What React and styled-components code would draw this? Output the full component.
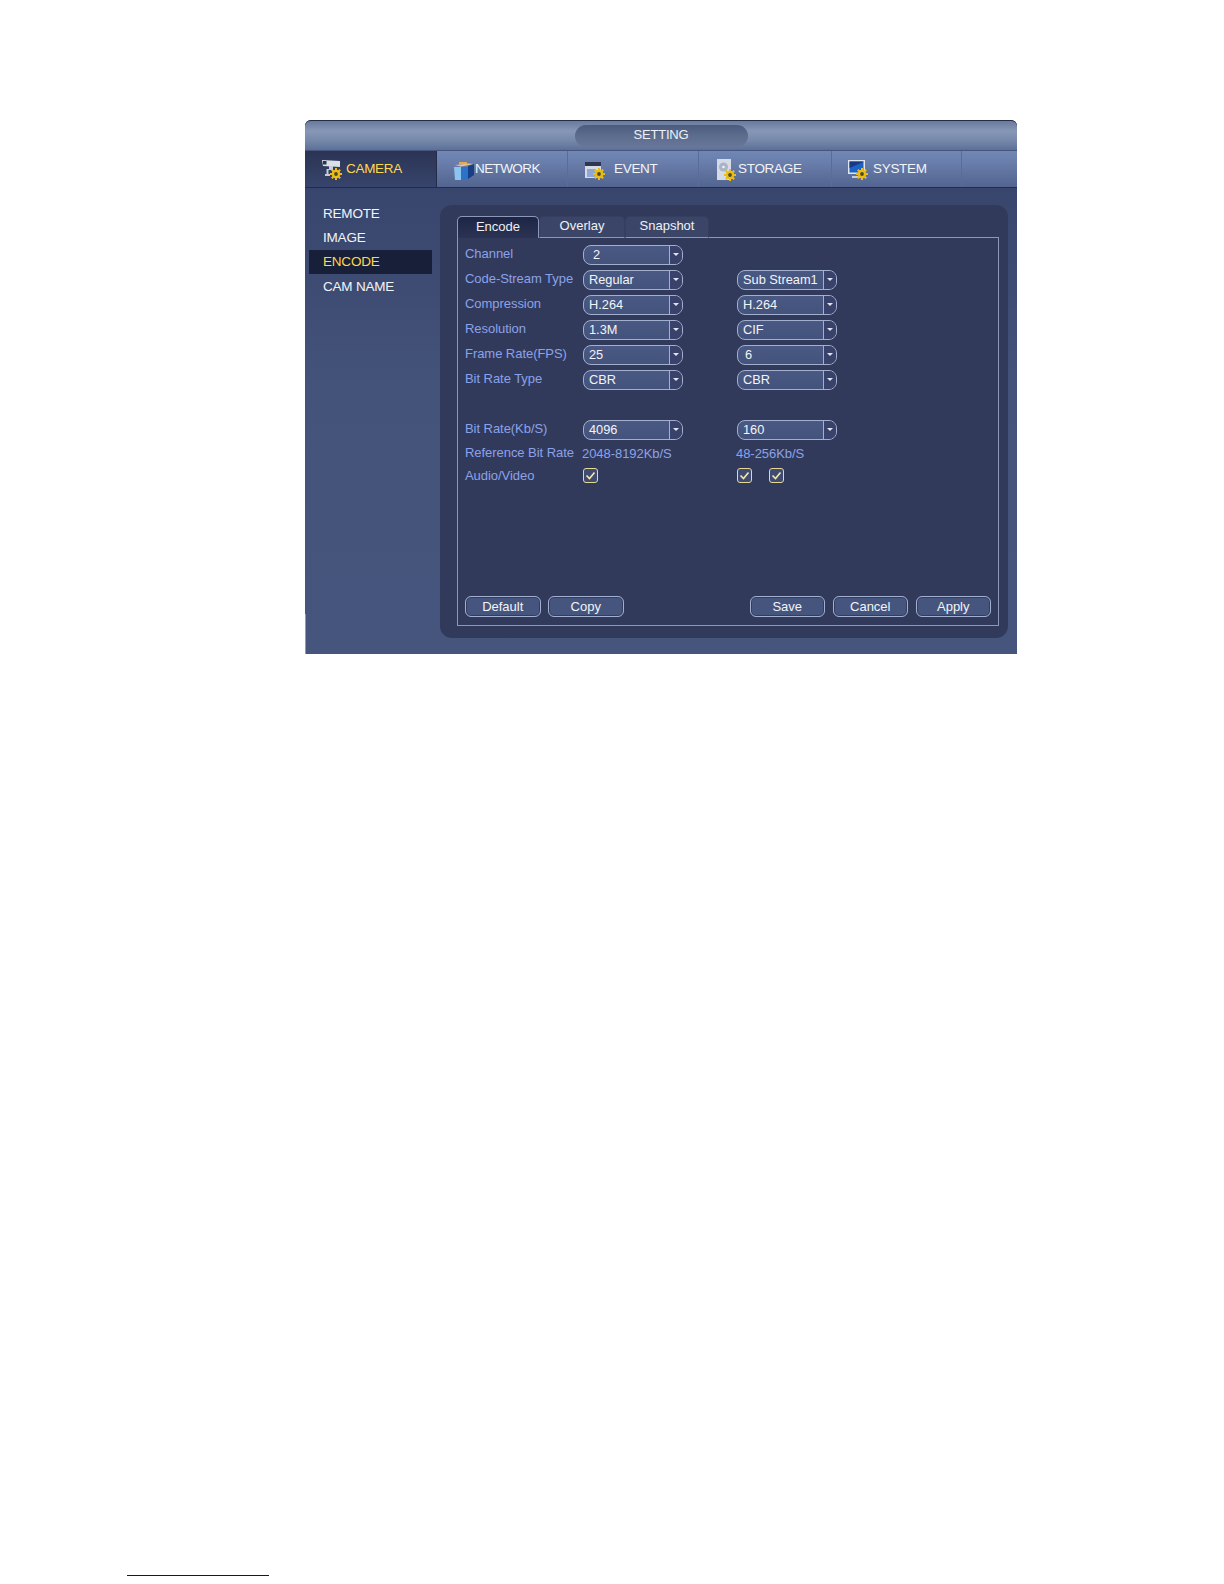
import React from 'react';
import styled, { createGlobalStyle } from 'styled-components';

const Global = createGlobalStyle`
  html, body { margin: 0; padding: 0; background: #fff; }
  body { font-family: "Liberation Sans", Arial, sans-serif; }
`;

const Page = styled.div`
  width: 1224px;
  height: 1584px;
  padding: 120px 0 0 305px;
  box-sizing: border-box;
  position: relative;
  overflow: hidden;
`;
const Window = styled.div`
  width: 712px;
  height: 534px;
  position: relative;
  background: linear-gradient(180deg, #38456d 68px, #445379 270px, #45557d 100%);
  border-radius: 6px 6px 0 0;
  display: flex;
  flex-direction: column;
  &::after {
    content: '';
    position: absolute;
    left: 0;
    bottom: 0;
    width: 1px;
    height: 40px;
    background: #8f9ab8;
  }
`;
const TitleBar = styled.div`
  height: 29px;
  flex: none;
  background: linear-gradient(180deg, #6a7a9c 0%, #8797b6 35%, #7487aa 70%, #5c6f97 100%);
  border-top: 1px solid #252c48;
  border-radius: 6px 6px 0 0;
  display: flex;
  justify-content: center;
  align-items: center;
`;
const TitlePill = styled.div`
  width: 173px;
  height: 22px;
  margin-left: 0;
  padding-bottom: 2px;
  box-sizing: border-box;
  border-radius: 11px;
  background: linear-gradient(180deg, #4b5b7e 0%, #5d6d8e 50%, #67769a 100%);
  color: #eef1f6;
  font-size: 13px;
  letter-spacing: -0.2px;
  display: flex;
  align-items: center;
  justify-content: center;
`;
const TabBar = styled.div`
  height: 38px;
  flex: none;
  box-sizing: border-box;
  display: flex;
  background: linear-gradient(180deg, #7088b6 0%, #677ba8 40%, #52648f 100%);
  border-top: 1px solid #47557d;
  border-bottom: 1px solid #232a4a;
`;
const MainTab = styled.div`
  width: ${p => p.$w}px;
  flex: none;
  height: 100%;
  box-sizing: border-box;
  display: flex;
  align-items: center;
  padding-left: ${p => p.$pad}px;
  padding-bottom: 2px;
  gap: ${p => p.$gap}px;
  font-size: 13.5px;
  letter-spacing: ${p => p.$ls || -0.3}px;
  color: ${p => (p.$active ? '#ffd84a' : '#f1f4f8')};
  background: ${p => (p.$active ? 'linear-gradient(180deg, #2b3454 0%, #37446c 100%)' : 'transparent')};
  border-right: 1px solid ${p => (p.$active ? '#232a4a' : '#5a6c98')};
  svg { flex: none; margin-top: 4px; }
`;
const Body = styled.div`
  flex: 1;
  display: flex;
  min-height: 0;
`;
const SideMenu = styled.div`
  width: 135px;
  flex: none;
  padding: 13px 0 0 4px;
  box-sizing: border-box;
`;
const SideItem = styled.div`
  width: 123px;
  height: 24.4px;
  box-sizing: border-box;
  padding-left: 14px;
  display: flex;
  align-items: center;
  font-size: 13.5px;
  letter-spacing: -0.2px;
  color: ${p => (p.$active ? '#ffd84a' : '#f1f4f8')};
  background: ${p => (p.$active ? '#181f38' : 'transparent')};
`;
const Panel = styled.div`
  width: 568px;
  height: 433px;
  margin-top: 17px;
  flex: none;
  background: #323a5b;
  border-radius: 12px;
  padding: 11px 9px 0 17px;
  box-sizing: border-box;
  display: flex;
  flex-direction: column;
`;
const SubTabs = styled.div`
  display: flex;
  height: 22px;
  flex: none;
`;
const SubTab = styled.div`
  width: ${p => p.$w}px;
  height: 22px;
  box-sizing: border-box;
  padding-bottom: 3px;
  display: flex;
  align-items: center;
  justify-content: center;
  font-size: 13px;
  color: #eef1f6;
  border-radius: 5px 5px 0 0;
  background: ${p => (p.$active ? 'linear-gradient(180deg, #1e2544 0%, #2b3354 100%)' : '#3b4567')};
  border: 1px solid ${p => (p.$active ? '#8d98b8' : '#363f60')};
  border-bottom: ${p => (p.$active ? 'none' : '1px solid #8d98b8')};
`;
const SubTabRest = styled.div`
  flex: 1;
  border-bottom: 1px solid #8d98b8;
`;
const Content = styled.div`
  width: 542px;
  height: 388px;
  box-sizing: border-box;
  border: 1px solid #8d98b8;
  border-top: none;
  padding: 4px 7px 0 7px;
  display: flex;
  flex-direction: column;
`;
const Row = styled.div`
  height: ${p => p.$h || 25}px;
  flex: none;
  display: flex;
  align-items: center;
`;
const Label = styled.div`
  width: 118px;
  flex: none;
  box-sizing: border-box;
  font-size: 13px;
  letter-spacing: -0.05px;
  color: #8ba2ea;
  white-space: nowrap;
  margin-top: -2px;
`;
const Cell = styled.div`
  width: 154px;
  flex: none;
  display: flex;
  align-items: center;
  gap: 17px;
`;
const Select = styled.div`
  width: 100px;
  height: 20px;
  box-sizing: border-box;
  border: 1px solid #a3afce;
  border-radius: 8px;
  background: linear-gradient(180deg, #4a5983 0%, #44537c 100%);
  display: flex;
  color: #f1f4f8;
  font-size: 12.8px;
  overflow: hidden;
`;
const SelectValue = styled.div`
  flex: 1;
  padding-left: ${p => p.$pad || 5}px;
  display: flex;
  align-items: center;
  white-space: nowrap;
`;
const SelectArrow = styled.div`
  width: 13px;
  flex: none;
  box-sizing: border-box;
  border-left: 1px solid #a3afce;
  background: #38426a;
  display: flex;
  align-items: center;
  justify-content: center;
  &::after {
    content: '';
    border: 3px solid transparent;
    border-top: 3px solid #dfe4ef;
    border-bottom: none;
  }
`;
const RefText = styled.div`
  font-size: 13px;
  letter-spacing: -0.05px;
  color: #8ba2ea;
  white-space: nowrap;
  margin-left: -1px;
`;
const Check = styled.div`
  width: 15px;
  height: 15px;
  margin-top: -2px;
  box-sizing: border-box;
  border: 1.5px solid #e6da92;
  border-radius: 3px;
  background: #3f4b72;
  display: flex;
  align-items: center;
  justify-content: center;
`;
const Buttons = styled.div`
  display: flex;
  margin-top: auto;
  margin-bottom: 8px;
  gap: 7.5px;
`;
const Button = styled.div`
  width: 75.5px;
  height: 21px;
  box-sizing: border-box;
  border: 1px solid #a3afce;
  border-radius: 6px;
  box-shadow: inset 0 0 0 1px #343d60;
  background: #46557e;
  color: #f1f4f8;
  font-size: 13px;
  display: flex;
  align-items: center;
  justify-content: center;
`;
const Spacer = styled.div`
  flex: 1;
`;
const FootLink = styled.div`
  position: absolute;
  left: 127px;
  top: 1575px;
  width: 142px;
  height: 1px;
  background: #0a0a90;
`;

const Gear = ({ x, y }) => (
  <g transform={`translate(${x} ${y})`}>
    <path d="M0-6V6M-6 0H6M-4.2-4.2L4.2 4.2M-4.2 4.2L4.2-4.2" stroke="#eebd14" strokeWidth="2" />
    <circle r="4.2" fill="#eebd14" />
    <circle r="1.9" fill="#4a4a30" />
  </g>
);

const CameraIcon = () => (
  <svg width="22" height="22" viewBox="0 0 22 22">
    <path d="M0 1L18 2V8L1 7Z" fill="#d9dee7" />
    <path d="M1 2H4.5V5.5H1Z" fill="#2a3350" />
    <path d="M7 7H11V11H6.5V15H8V17H3V15H4.5V10H7Z" fill="#c5ccd8" />
    <Gear x={14} y={15} />
  </svg>
);
const NetworkIcon = () => (
  <svg width="22" height="22" viewBox="0 0 22 22">
    <path d="M6 3H14V5H6Z" fill="#e9a850" />
    <path d="M2 6L16 4.5L21 5L8 7.5Z" fill="#e8c48c" />
    <path d="M1 8H8V21H2Z" fill="#8cc4ee" />
    <path d="M8 8H15V20L8 21Z" fill="#2c72c8" />
    <path d="M15 7L21 5V16L15 20Z" fill="#163f86" />
  </svg>
);
const EventIcon = () => (
  <svg width="22" height="22" viewBox="0 0 22 22">
    <path d="M1 3H17V19H1Z" fill="#d5dbe6" />
    <path d="M1 3H17V7H1Z" fill="#2e3650" />
    <path d="M3 10H12V18H3Z" fill="#8ea7d4" />
    <Gear x={15} y={15} />
  </svg>
);
const StorageIcon = () => (
  <svg width="22" height="24" viewBox="0 0 22 24">
    <path d="M1 1H15V22H1Z" fill="#d5dbe6" />
    <circle cx="7.5" cy="9" r="4.5" fill="#a9b4c8" />
    <circle cx="7.5" cy="9" r="1.3" fill="#eef1f6" />
    <Gear x={14} y={17} />
  </svg>
);
const SystemIcon = () => (
  <svg width="22" height="22" viewBox="0 0 22 22">
    <path d="M1 1H18V15H1Z" fill="#dfe4ef" />
    <path d="M2.5 2.5H16.5V13.5H2.5Z" fill="#1c63c6" />
    <path d="M2.5 9L16.5 3V2.5H2.5Z" fill="#173a86" />
    <path d="M5 17H13V19H5Z" fill="#c5ccd8" />
    <Gear x={15} y={15} />
  </svg>
);
const Tick = () => (
  <svg width="11" height="11" viewBox="0 0 11 11">
    <path d="M1.5 5.5L4.5 8.5L9.5 2.5" fill="none" stroke="#f6e9a8" strokeWidth="1.6" />
  </svg>
);

const Sel = ({ pad, children }) => (
  <Select>
    <SelectValue $pad={pad}>{children}</SelectValue>
    <SelectArrow />
  </Select>
);

const rows = [
  ['Channel', '2', null, 9],
  ['Code-Stream Type', 'Regular', 'Sub Stream1'],
  ['Compression', 'H.264', 'H.264'],
  ['Resolution', '1.3M', 'CIF'],
  ['Frame Rate(FPS)', '25', '6', 5, 7],
  ['Bit Rate Type', 'CBR', 'CBR'],
];

export default function App() {
  return (
    <Page>
      <Global />
      <Window>
        <TitleBar><TitlePill>SETTING</TitlePill></TitleBar>
        <TabBar>
          <MainTab $active $w={132} $pad={17} $gap={2}><CameraIcon />CAMERA</MainTab>
          <MainTab $w={131} $pad={16} $gap={0} $ls={-0.6}><NetworkIcon />NETWORK</MainTab>
          <MainTab $w={131} $pad={16} $gap={8}><EventIcon />EVENT</MainTab>
          <MainTab $w={133} $pad={17} $gap={0}><StorageIcon />STORAGE</MainTab>
          <MainTab $w={130} $pad={15} $gap={4}><SystemIcon />SYSTEM</MainTab>
        </TabBar>
        <Body>
          <SideMenu>
            <SideItem>REMOTE</SideItem>
            <SideItem>IMAGE</SideItem>
            <SideItem $active>ENCODE</SideItem>
            <SideItem>CAM NAME</SideItem>
          </SideMenu>
          <Panel>
            <SubTabs>
              <SubTab $active $w={82}>Encode</SubTab>
              <SubTab $w={86}>Overlay</SubTab>
              <SubTab $w={84}>Snapshot</SubTab>
              <SubTabRest />
            </SubTabs>
            <Content>
              {rows.map(([label, a, b, padA, padB]) => (
                <Row key={label}>
                  <Label>{label}</Label>
                  <Cell><Sel pad={padA}>{a}</Sel></Cell>
                  {b && <Cell><Sel pad={padB}>{b}</Sel></Cell>}
                </Row>
              ))}
              <Row />
              <Row>
                <Label>Bit Rate(Kb/S)</Label>
                <Cell><Sel>4096</Sel></Cell>
                <Cell><Sel>160</Sel></Cell>
              </Row>
              <Row $h={23}>
                <Label>Reference Bit Rate</Label>
                <Cell><RefText>2048-8192Kb/S</RefText></Cell>
                <Cell><RefText>48-256Kb/S</RefText></Cell>
              </Row>
              <Row $h={22}>
                <Label>Audio/Video</Label>
                <Cell><Check><Tick /></Check></Cell>
                <Cell><Check><Tick /></Check><Check><Tick /></Check></Cell>
              </Row>
              <Buttons>
                <Button>Default</Button>
                <Button>Copy</Button>
                <Spacer />
                <Button>Save</Button>
                <Button>Cancel</Button>
                <Button>Apply</Button>
              </Buttons>
            </Content>
          </Panel>
        </Body>
      </Window>
      <FootLink />
    </Page>
  );
}
